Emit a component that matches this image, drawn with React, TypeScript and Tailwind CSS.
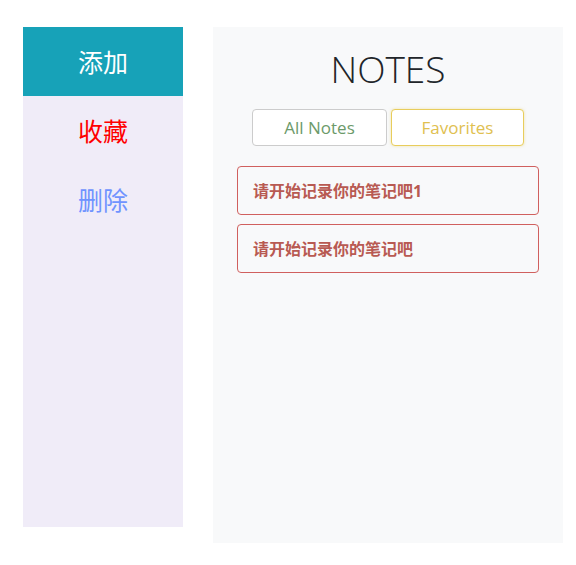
import React from "react";

export default function App() {
  const cjk = { fontFamily: '"Segoe UI", "Open Sans", "Noto Sans CJK SC", sans-serif' };
  return (
    <div className="flex items-start gap-[30px] pl-[23px] pt-[27px] bg-white min-h-[565px]" style={cjk}>
      <div className="w-[160px] h-[500px] bg-[#f0ecf8] flex flex-col">
        <div className="h-[69px] bg-[#17a2b8] flex items-center justify-center text-white text-[25px] pt-[2px]">添加</div>
        <div className="h-[69px] flex items-center justify-center text-[#ff0000] text-[25px] pt-[2px]">收藏</div>
        <div className="h-[69px] flex items-center justify-center text-[#6f93ff] text-[25px] pt-[2px]">删除</div>
      </div>
      <div className="w-[350px] h-[516px] bg-[#f8f9fa] flex flex-col px-[24px]">
        <div className="mt-[18px] h-[46px] flex items-center justify-center text-[37px] font-light text-[#212529] leading-none">NOTES</div>
        <div className="mt-[18px] flex justify-center gap-[4px]">
          <button className="w-[135px] h-[37px] bg-white border border-[#cccccc] rounded-[4px] text-[#6c9a6a] text-[17px]">All Notes</button>
          <button className="w-[133px] h-[37px] bg-white border border-[#e8cd5c] rounded-[4px] text-[#e0c050] text-[17px] shadow-[0_0_3px_rgba(232,205,92,0.5)]">Favorites</button>
        </div>
        <div className="mt-[20px] flex flex-col gap-[9px]">
          <div className="h-[49px] border border-[#d0605e] rounded-[4px] flex items-center pl-[15px] text-[16px] font-bold text-[#b85a52]">请开始记录你的笔记吧1</div>
          <div className="h-[49px] border border-[#d0605e] rounded-[4px] flex items-center pl-[15px] text-[16px] font-bold text-[#b85a52]">请开始记录你的笔记吧</div>
        </div>
      </div>
    </div>
  );
}
